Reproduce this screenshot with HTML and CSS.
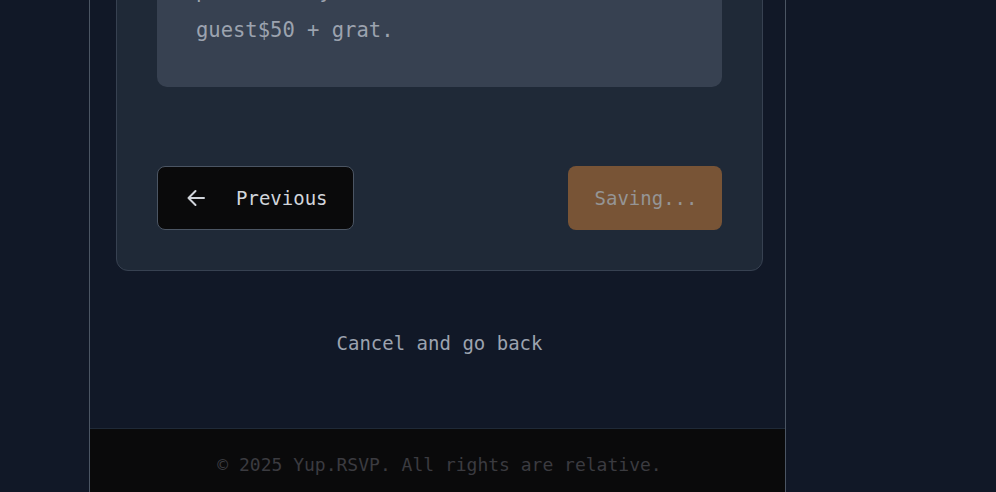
FILE: index.html
```html
<!DOCTYPE html>
<html lang="en">
<head>
<meta charset="utf-8">
<title>Yup.RSVP</title>
<link rel="stylesheet" href="styles.css">
</head>
<body>
<div class="frame">
  <main class="main">
    <section class="card">
      <div class="notes">
        <p class="notes-line">plus tax by</p>
        <p class="notes-line">guest$50 + grat.</p>
      </div>
      <div class="actions">
        <button class="btn btn-prev" type="button">
          <svg class="arrow" width="20" height="20" viewBox="0 0 20 20" aria-hidden="true">
            <path d="M18 10H2.5M9.5 3l-7 7 7 7" fill="none" stroke="currentColor" stroke-width="2" stroke-linecap="round" stroke-linejoin="round"/>
          </svg>
          <span>Previous</span>
        </button>
        <button class="btn btn-save" type="button" disabled>Saving...</button>
      </div>
    </section>
    <div class="cancel-row">
      <a class="cancel" href="#">Cancel and go back</a>
    </div>
  </main>
  <footer class="footer">
    <p>© 2025 Yup.RSVP. All rights are relative.</p>
  </footer>
</div>
</body>
</html>
```
FILE: styles.css
```css
* { box-sizing: border-box; }
html, body { margin: 0; padding: 0; }
body {
  background: #111827;
  font-family: "DejaVu Sans Mono", "Liberation Mono", monospace;
  color: #9ca3af;
  overflow: hidden;
}
.frame {
  margin-left: 89px;
  width: 697px;
  margin-top: -80px;
  border-left: 1px solid #4b5563;
  border-right: 1px solid #4b5563;
  background: #111827;
}
.main {
  padding: 0 22px 0 26px;
}
.card {
  background: #1f2937;
  border: 1px solid #374151;
  border-radius: 12px;
  padding: 40px;
}
.notes {
  background: #374151;
  border-radius: 10px;
  padding: 11px 20px 37px 39px;
}
.notes-line {
  margin: 0;
  font-size: 20.5px;
  line-height: 39px;
  color: #9ca3af;
}
.actions {
  display: flex;
  justify-content: space-between;
  align-items: center;
  margin-top: 79px;
}
.btn {
  font-family: inherit;
  font-size: 19px;
  height: 64px;
  border-radius: 8px;
  cursor: pointer;
}
.btn-prev {
  display: flex;
  align-items: center;
  gap: 30px;
  width: 197px;
  padding: 0 0 0 28px;
  background: #0a0a0b;
  border: 1px solid #4b5563;
  color: #d1d5db;
}
.arrow { display: block; }
.btn-save {
  width: 154px;
  padding: 0 0 0 2px;
  border: none;
  background: #785436;
  color: #959595;
}
.cancel-row {
  display: flex;
  justify-content: center;
  padding: 60px 0 73px;
}
.cancel {
  font-size: 19px;
  line-height: 24px;
  color: #9ca3af;
  text-decoration: none;
}
.footer {
  background: #0a0a0b;
  border-top: 1px solid #1f2937;
  padding: 24px 0 40px 4px;
  text-align: center;
}
.footer p {
  margin: 0;
  font-size: 18px;
  line-height: 24px;
  color: #3b3b40;
}
```
